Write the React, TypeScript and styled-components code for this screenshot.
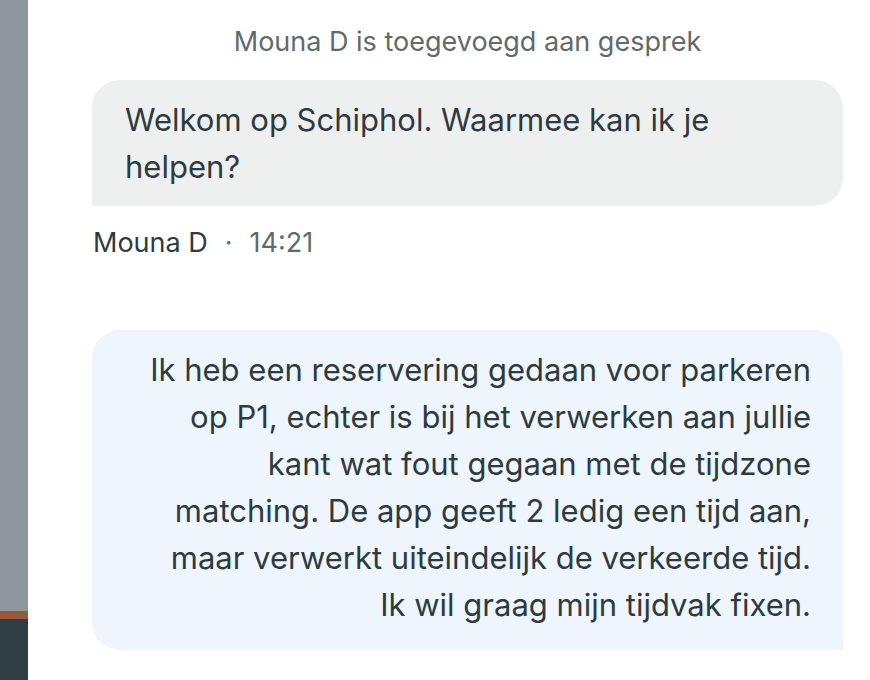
import React from 'react'
import styled, { createGlobalStyle } from 'styled-components'

const GlobalStyle = createGlobalStyle`
    html, body {
        margin: 0;
        padding: 0;
        background: #ffffff;
    }
    body {
        font-family: Inter, "Noto Sans", sans-serif;
        color: #2d3b40;
    }
`;

const Page = styled.div`
    display: flex;
    width: 870px;
    height: 680px;
    overflow: hidden;
`;

const Sidebar = styled.div`
    width: 28px;
    flex-shrink: 0;
    display: flex;
    flex-direction: column;
`;

const SideBlock = styled.div<{ $color: string; $height?: number }>`
    background: ${(p) => p.$color};
    flex: ${(p) => (p.$height ? `0 0 ${p.$height}px` : '1')};
`;

const Conversation = styled.div`
    flex: 1;
    display: flex;
    flex-direction: column;
    padding: 26px 27px 0 64px;
`;

const SystemNote = styled.div`
    text-align: center;
    font-size: 27px;
    line-height: 32px;
    color: #5f6b6b;
    margin-bottom: 22px;
`;

const Bubble = styled.div<{ $mine?: boolean }>`
    background: ${(p) => (p.$mine ? '#eef5fc' : '#eef0f0')};
    border-radius: ${(p) => (p.$mine ? '28px 28px 0 28px' : '28px 28px 28px 0')};
    padding: ${(p) => (p.$mine ? '16px 32px 22px 33px' : '16px 32px 16px 33px')};
    font-size: 31px;
    line-height: 47px;
    text-align: ${(p) => (p.$mine ? 'right' : 'left')};
    color: #2d3b40;
`;

const KeepTogether = styled.span`
    white-space: nowrap;
`;

const Meta = styled.div`
    display: flex;
    align-items: center;
    gap: 17px;
    padding: 22px 0 0 1px;
    font-size: 27px;
    line-height: 30px;
    margin-bottom: 72px;
`;

const Author = styled.span`
    color: #2d3b40;
`;

const Dot = styled.span`
    color: #5f6b6b;
`;

const Time = styled.span`
    color: #5f6b6b;
`;

const App: React.FC = () => {
    return (
        <>
            <GlobalStyle />
            <Page>
                <Sidebar>
                    <SideBlock $color="#8f969d" />
                    <SideBlock $color="#985b3a" $height={8} />
                    <SideBlock $color="#2f3d44" $height={61} />
                </Sidebar>
                <Conversation>
                    <SystemNote>Mouna D is toegevoegd aan gesprek</SystemNote>
                    <Bubble>Welkom op Schiphol. Waarmee kan ik je helpen?</Bubble>
                    <Meta>
                        <Author>Mouna D</Author>
                        <Dot>·</Dot>
                        <Time>14:21</Time>
                    </Meta>
                    <Bubble $mine>
                        Ik heb een reservering gedaan voor parkeren op P1, echter is bij het verwerken aan jullie
                        kant wat fout gegaan met de tijdzone matching. De app geeft 2 ledig een tijd aan, maar
                        verwerkt uiteindelijk de verkeerde tijd. <KeepTogether>Ik wil graag mijn tijdvak fixen.</KeepTogether>
                    </Bubble>
                </Conversation>
            </Page>
        </>
    )
}

export default App
